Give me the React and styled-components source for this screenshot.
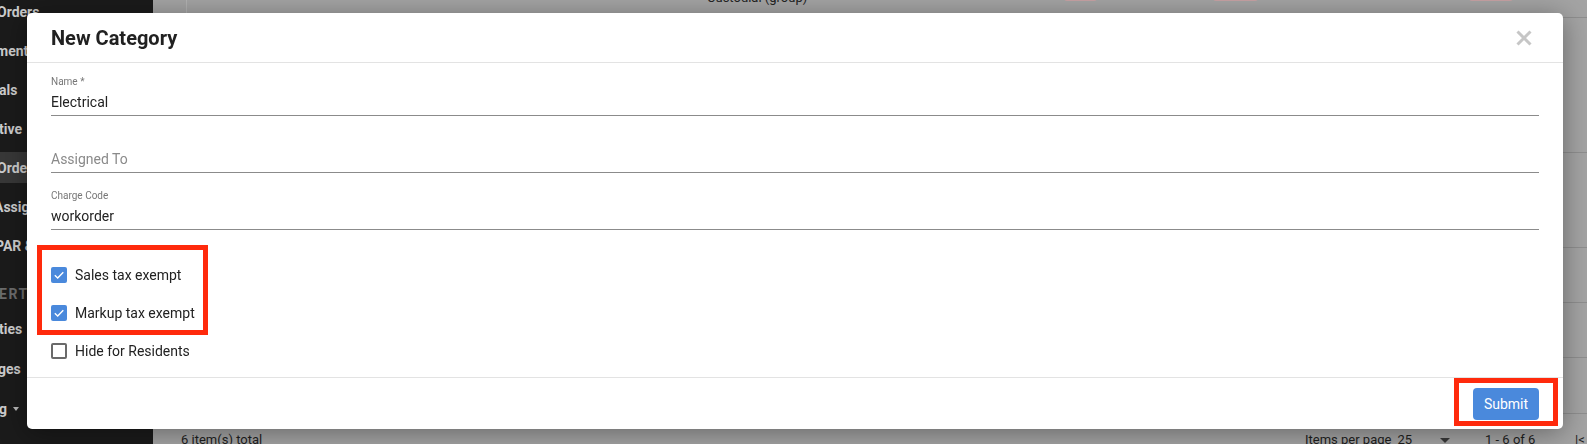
import React from 'react'
import styled, { createGlobalStyle } from 'styled-components'

const GlobalStyle = createGlobalStyle`
  html, body {
    margin: 0;
    padding: 0;
    height: 100%;
    overflow: hidden;
  }
  body {
    font-family: Roboto, "Liberation Sans", Arial, sans-serif;
    background: #a4a4a4;
  }
  * {
    box-sizing: border-box;
  }
`

const Page = styled.div`
  display: flex;
  width: 100%;
  height: 100vh;
`

const Sidebar = styled.nav`
  flex: 0 0 153px;
  background: #1b1b1b;
  overflow: hidden;
`

const NavList = styled.ul`
  list-style: none;
  margin: -8px 0 0;
  padding: 0;
`

const NavItem = styled.li`
  padding: 4px 0;
`

const NavLink = styled.div`
  height: 31px;
  display: flex;
  align-items: center;
  background: ${p => (p.$active ? '#383838' : 'transparent')};
  color: #cdcdcd;
  font-size: 14px;
  font-weight: 700;
  white-space: nowrap;
  span {
    margin-left: ${p => p.$shift || 0}px;
  }
`

const NavSection = styled.li`
  padding: 22px 0 8px;
  line-height: 14px;
  color: #6c6c6c;
  font-size: 14px;
  font-weight: 700;
  letter-spacing: 1.5px;
  white-space: nowrap;
  span {
    margin-left: ${p => p.$shift || 0}px;
  }
`

const NavGroup = styled.li`
  height: 40px;
  display: flex;
  align-items: center;
  color: #cdcdcd;
  font-size: 14px;
  font-weight: 700;
  white-space: nowrap;
  span {
    margin-left: ${p => p.$shift || 0}px;
  }
`

const Caret = styled.i`
  display: inline-block;
  width: 0;
  height: 0;
  margin-left: 6px;
  border-left: 3.5px solid transparent;
  border-right: 3.5px solid transparent;
  border-top: 4px solid #b8b8b8;
`

const Main = styled.main`
  flex: 1;
  min-width: 0;
  display: flex;
  flex-direction: column;
  background: #a4a4a4;
  color: #232323;
`

const TableRow = styled.div`
  height: ${p => p.$h}px;
  flex: 0 0 auto;
  display: flex;
  align-items: flex-start;
  border-bottom: 1px solid #8f8f8f;
`

const EdgeCell = styled.div`
  flex: 0 0 34px;
  align-self: stretch;
  border-right: 1px solid #b3b3b3;
`

const RowText = styled.div`
  flex-shrink: 0;
  margin: -12px 0 0 520px;
  font-size: 13px;
  line-height: 20px;
`

const Badge = styled.div`
  flex: 0 0 ${p => p.$w}px;
  height: 20px;
  margin: -19px 0 0 ${p => p.$gap}px;
  border-radius: 3px;
  background: #c7a2a4;
`

const Pager = styled.div`
  flex: 1;
  display: grid;
  grid-template-columns: 1124px 135px 45px 90px auto;
  align-items: start;
  padding: 18px 0 0 28px;
  font-size: 13px;
  line-height: 16px;
  color: #1e1e1e;
  white-space: nowrap;
`

const PageSize = styled.span`
  display: flex;
  gap: 6px;
`

const PagerCaret = styled.i`
  display: inline-block;
  width: 0;
  height: 0;
  margin-top: 6px;
  border-left: 5px solid transparent;
  border-right: 5px solid transparent;
  border-top: 5px solid #3a3a3a;
`

const Overlay = styled.div`
  position: fixed;
  inset: 0;
  display: flex;
  padding: 13px 24px 15px 27px;
`

const Modal = styled.div`
  flex: 1;
  display: flex;
  flex-direction: column;
  background: #fff;
  border-radius: 5px;
  box-shadow: 0 4px 28px rgba(0, 0, 0, 0.38);
`

const Header = styled.header`
  height: 50px;
  display: flex;
  align-items: center;
  justify-content: space-between;
  padding: 0 31px 0 24px;
  border-bottom: 1px solid #e3e3e3;
`

const Title = styled.h1`
  margin: 0;
  font-size: 20px;
  font-weight: 700;
  color: #212121;
`

const CloseButton = styled.button`
  width: 16px;
  height: 16px;
  padding: 0;
  border: 0;
  background: none;
  display: flex;
  cursor: pointer;
`

const Body = styled.div`
  flex: 1;
  padding: 12px 24px 16px;
  display: flex;
  flex-direction: column;
`

const Field = styled.div`
  display: flex;
  flex-direction: column;
  border-bottom: 1px solid #8b8b8b;
  & + & {
    margin-top: 16px;
  }
`

const Label = styled.label`
  height: 14px;
  font-size: 10px;
  line-height: 14px;
  color: #777;
`

const Value = styled.div`
  height: 26px;
  font-size: 14px;
  line-height: 26px;
  color: ${p => (p.$placeholder ? '#8a8a8a' : '#222')};
`

const Highlight = styled.div`
  position: relative;
  width: fit-content;
  &::after {
    content: '';
    position: absolute;
    top: -${p => p.$t}px;
    bottom: -${p => p.$b}px;
    left: -${p => p.$l}px;
    right: -${p => p.$r}px;
    border: 5px solid #ff2a0c;
    pointer-events: none;
  }
`

const CheckGroup = styled(Highlight)`
  display: flex;
  flex-direction: column;
  gap: 18px;
  margin-top: 35px;
`

const CheckRow = styled.label`
  display: flex;
  align-items: center;
  gap: 8px;
  height: 20px;
  font-size: 14px;
  color: #222;
  white-space: nowrap;
  margin-top: ${p => p.$mt || 0}px;
`

const Box = styled.span`
  flex: 0 0 16px;
  height: 16px;
  border-radius: 2px;
  display: flex;
  align-items: center;
  justify-content: center;
  background: ${p => (p.$checked ? '#4a89dc' : '#fff')};
  border: ${p => (p.$checked ? 'none' : '2px solid #6a6a6a')};
`

const Footer = styled.footer`
  display: flex;
  justify-content: flex-end;
  padding: 10px 24px 9px;
  border-top: 1px solid #e3e3e3;
`

const SubmitButton = styled.button`
  width: 66px;
  height: 32px;
  border: 0;
  border-radius: 4px;
  background: #4a89dc;
  color: #fff;
  font-family: inherit;
  font-size: 14px;
  cursor: pointer;
`

const Checkbox = ({ checked, label, mt }) => (
  <CheckRow $mt={mt}>
    <Box $checked={checked}>
      {checked && (
        <svg width="16" height="16" viewBox="0 0 16 16">
          <path d="M3.8 8.3 L6.7 11 L12.3 5.2" fill="none" stroke="#fff" strokeWidth="1.4" />
        </svg>
      )}
    </Box>
    {label}
  </CheckRow>
)

const App = () => {
  return (
    <>
      <GlobalStyle />
      <Page>
        <Sidebar>
          <NavList>
            <NavItem><NavLink $shift={-3}><span>Orders</span></NavLink></NavItem>
            <NavItem><NavLink $shift={-4}><span>ment</span></NavLink></NavItem>
            <NavItem><NavLink $shift={-1}><span>als</span></NavLink></NavItem>
            <NavItem><NavLink $shift={-1}><span>tive</span></NavLink></NavItem>
            <NavItem><NavLink $active $shift={-3}><span>Order</span></NavLink></NavItem>
            <NavItem><NavLink $shift={-6}><span>Assig</span></NavLink></NavItem>
            <NavItem><NavLink $shift={-5}><span>PAR &amp;</span></NavLink></NavItem>
            <NavSection $shift={-1}><span>ERTY</span></NavSection>
            <NavGroup $shift={-1}><span>ties</span><Caret /></NavGroup>
            <NavGroup $shift={-2}><span>ges</span><Caret /></NavGroup>
            <NavGroup $shift={-1}><span>g</span><Caret /></NavGroup>
          </NavList>
        </Sidebar>
        <Main>
          <TableRow $h={18}>
            <EdgeCell />
            <RowText>Custodial (group)</RowText>
            <Badge $w={33} $gap={257} />
            <Badge $w={45} $gap={116} />
            <Badge $w={44} $gap={211} />
          </TableRow>
          <TableRow $h={135} />
          <TableRow $h={95} />
          <TableRow $h={55} />
          <TableRow $h={55} />
          <TableRow $h={56} />
          <Pager>
            <span>6 item(s) total</span>
            <PageSize>
              <span>Items per page</span>
              <span>25</span>
            </PageSize>
            <PagerCaret />
            <span>1 - 6 of 6</span>
            <span>|&lt;</span>
          </Pager>
        </Main>
      </Page>

      <Overlay>
        <Modal>
          <Header>
            <Title>New Category</Title>
            <CloseButton aria-label="Close">
              <svg width="16" height="16" viewBox="0 0 16 16">
                <path d="M1.5 1.5 L14.5 14.5 M14.5 1.5 L1.5 14.5" stroke="#c6c6c6" strokeWidth="3" />
              </svg>
            </CloseButton>
          </Header>
          <Body>
            <Field>
              <Label>Name *</Label>
              <Value>Electrical</Value>
            </Field>
            <Field>
              <Label />
              <Value $placeholder>Assigned To</Value>
            </Field>
            <Field>
              <Label>Charge Code</Label>
              <Value>workorder</Value>
            </Field>
            <CheckGroup $t={20} $b={12} $l={14} $r={13}>
              <Checkbox checked label="Sales tax exempt" />
              <Checkbox checked label="Markup tax exempt" />
            </CheckGroup>
            <Checkbox label="Hide for Residents" mt={18} />
          </Body>
          <Footer>
            <Highlight $t={10} $b={6} $l={19} $r={19}>
              <SubmitButton>Submit</SubmitButton>
            </Highlight>
          </Footer>
        </Modal>
      </Overlay>
    </>
  )
}

export default App
